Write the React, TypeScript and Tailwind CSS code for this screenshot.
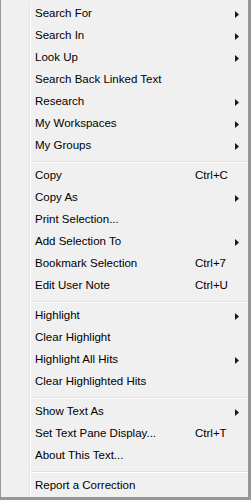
import React from 'react'

type Item = { label: string; shortcut?: string; sub?: boolean }

const groups: Item[][] = [
  [
    { label: 'Search For', sub: true },
    { label: 'Search In', sub: true },
    { label: 'Look Up', sub: true },
    { label: 'Search Back Linked Text' },
    { label: 'Research', sub: true },
    { label: 'My Workspaces', sub: true },
    { label: 'My Groups', sub: true },
  ],
  [
    { label: 'Copy', shortcut: 'Ctrl+C' },
    { label: 'Copy As', sub: true },
    { label: 'Print Selection...' },
    { label: 'Add Selection To', sub: true },
    { label: 'Bookmark Selection', shortcut: 'Ctrl+7' },
    { label: 'Edit User Note', shortcut: 'Ctrl+U' },
  ],
  [
    { label: 'Highlight', sub: true },
    { label: 'Clear Highlight' },
    { label: 'Highlight All Hits', sub: true },
    { label: 'Clear Highlighted Hits' },
  ],
  [
    { label: 'Show Text As', sub: true },
    { label: 'Set Text Pane Display...', shortcut: 'Ctrl+T' },
    { label: 'About This Text...' },
  ],
  [{ label: 'Report a Correction' }],
]

function SubArrow() {
  return (
    <svg width="4" height="7" viewBox="0 0 4 7" className="block">
      <path d="M0 0 L4 3.5 L0 7 Z" fill="#1a1a1a" />
    </svg>
  )
}

function MenuRow({ item }: { item: Item }) {
  return (
    <div className="flex h-[22px] items-center text-[11.5px] text-black">
      <span className="w-[164px] shrink-0 pl-[4px] whitespace-nowrap">{item.label}</span>
      <span className="flex-1 whitespace-nowrap">{item.shortcut}</span>
      <span className="flex w-[13px] shrink-0 items-center">{item.sub && <SubArrow />}</span>
    </div>
  )
}

function Separator() {
  return (
    <div className="flex h-[8px] flex-col pt-[4px]">
      <div className="h-px bg-[#e0e0e0]" />
      <div className="h-px bg-white" />
    </div>
  )
}

export default function App() {
  return (
    <div
      className="flex h-[500px] w-[251px] border-b-[3px] border-l border-r-[3px] border-[#979797] bg-[#f0f0f0] pt-[3px]"
      style={{ fontFamily: '"Liberation Sans", Arial, sans-serif' }}
    >
      {/* Icon gutter */}
      <div className="w-[29px] shrink-0 border-r border-[#e2e3e3]" />
      <div className="flex flex-1 flex-col border-l border-white">
        {groups.map((group, i) => (
          <React.Fragment key={i}>
            {i > 0 && <Separator />}
            {group.map(item => (
              <MenuRow key={item.label} item={item} />
            ))}
          </React.Fragment>
        ))}
      </div>
    </div>
  )
}
